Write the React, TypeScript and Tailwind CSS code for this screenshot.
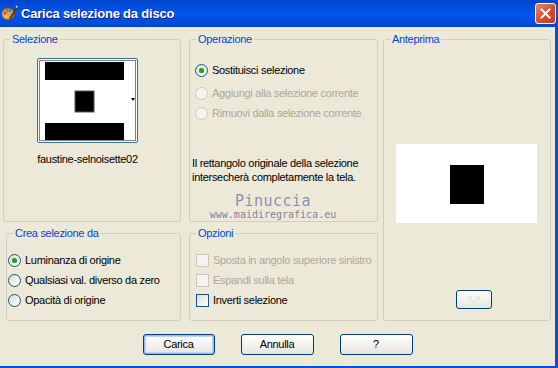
import React from "react";

const font = { fontFamily: '"Liberation Sans", Arial, sans-serif' };

function Radio({ checked, disabled }: { checked?: boolean; disabled?: boolean }) {
  return (
    <span
      className={
        disabled
          ? "w-[13px] h-[13px] rounded-full border border-[#CAC8BB] bg-[#F4F3EE] flex items-center justify-center shrink-0"
          : "w-[13px] h-[13px] rounded-full border border-[#1C5180] bg-gradient-to-br from-[#DCDCD7] to-white flex items-center justify-center shrink-0"
      }
    >
      {checked && <span className="w-[5px] h-[5px] rounded-full bg-[#21A121] shadow-[0_0_1px_#5BD35B]" />}
    </span>
  );
}

function Check({ disabled }: { disabled?: boolean }) {
  return (
    <span
      className={
        disabled
          ? "w-[13px] h-[13px] border border-[#CAC8BB] bg-[#F4F3EE] shrink-0"
          : "w-[13px] h-[13px] border border-[#1C5180] bg-gradient-to-br from-[#DCDCD7] to-white shrink-0"
      }
    />
  );
}

function Row({ children, label, disabled }: { children: React.ReactNode; label: string; disabled?: boolean }) {
  return (
    <div className="flex items-center gap-[4px] h-[14px] whitespace-nowrap">
      {children}
      <span className={disabled ? "text-[#ACA899] leading-[14px]" : "text-black leading-[14px]"}>{label}</span>
    </div>
  );
}

function Legend({ children }: { children: React.ReactNode }) {
  return <legend className="ml-[6px] px-[2px] text-[#0046D5] leading-[13px]">{children}</legend>;
}

function Button({ label, primary }: { label: string; primary?: boolean }) {
  return (
    <div
      className={
        primary
          ? "w-[72px] h-[21px] rounded-[3px] border border-[#003C74] bg-gradient-to-b from-white to-[#E6E5DE] shadow-[inset_0_0_0_1px_#98B8F8,inset_0_0_0_2px_#BCD4F6] flex items-center justify-center text-black"
          : "w-[73px] h-[21px] rounded-[3px] border border-[#003C74] bg-gradient-to-b from-white to-[#E6E5DE] flex items-center justify-center text-black"
      }
    >
      {label}
    </div>
  );
}

export default function App() {
  return (
    <div className="w-[558px] h-[368px] overflow-hidden bg-[#ECE9D8] text-[11px] tracking-[-0.3px] flex flex-col relative" style={font}>
      {/* Title bar */}
      <div className="h-[27px] shrink-0 flex items-center justify-between bg-gradient-to-b from-[#0044CF] via-[#0058EE] to-[#0047D0] pr-[2px]">
        <div className="flex items-center">
          <svg width="17" height="17" viewBox="0 0 17 17" className="ml-[1px]">
            <ellipse cx="7" cy="9" rx="6.5" ry="6" fill="#D9A066" stroke="#7A4A1E" strokeWidth="1" />
            <circle cx="4" cy="8" r="1.3" fill="#E33" />
            <circle cx="6" cy="5.5" r="1.3" fill="#3A3" />
            <circle cx="9" cy="5.5" r="1.3" fill="#36F" />
            <circle cx="5" cy="11.5" r="1.3" fill="#FC0" />
            <path d="M9 14 L16 2" stroke="#5B3A1A" strokeWidth="2" />
            <path d="M15 1 L16.5 2.5" stroke="#ddd" strokeWidth="1.5" />
          </svg>
          <span className="ml-[3px] text-white font-bold text-[13px] leading-[16px] tracking-[-0.2px] [text-shadow:1px_1px_0_#0A1E8C]">
            Carica selezione da disco
          </span>
        </div>
        <div className="w-[21px] h-[21px] rounded-[3px] border border-white bg-gradient-to-br from-[#E8846A] via-[#D9502E] to-[#C23A1C] flex items-center justify-center">
          <svg width="11" height="11" viewBox="0 0 11 11">
            <path d="M1.5 1.5 L9.5 9.5 M9.5 1.5 L1.5 9.5" stroke="white" strokeWidth="2" strokeLinecap="square" />
          </svg>
        </div>
      </div>

      {/* Body */}
      <div className="flex-1 flex flex-col border-r-[3px] border-b-[2px] border-[#0A4FD9]">
        <div className="flex pt-[6px] pl-[3px] gap-[8px]">
          {/* Column 1 */}
          <div className="flex flex-col gap-[5px] w-[178px] shrink-0">
            <fieldset className="min-w-0 h-[189px] border border-[#D0D0BF] rounded-[3px]">
              <Legend>Selezione</Legend>
              <div className="ml-[33px] mt-[12px] w-[101px] flex flex-col items-center">
                <div className="w-[101px] h-[85px] border border-[#3C6E97] rounded-[2px] bg-white relative">
                  <svg width="99" height="83" viewBox="0 0 99 83" className="block">
                    <rect x="1.5" y="1.5" width="96" height="80" fill="none" stroke="black" strokeDasharray="1 1" />
                    <rect x="7" y="3" width="79" height="18" fill="black" />
                    <rect x="37" y="32" width="19" height="21" fill="black" stroke="#555" />
                    <rect x="7" y="64" width="79" height="17" fill="black" />
                    <path d="M93 39 L97 39 L95 42 Z" fill="black" />
                  </svg>
                </div>
                <div className="mt-[10px] leading-[13px] text-black whitespace-nowrap">faustine-selnoisette02</div>
              </div>
            </fieldset>
            <fieldset className="min-w-0 ml-[3px] w-[175px] h-[94px] border border-[#D0D0BF] rounded-[3px]">
              <Legend>Crea selezione da</Legend>
              <div className="flex flex-col gap-[6px] mt-[13px] pl-[1px]">
                <Row label="Luminanza di origine">
                  <Radio checked />
                </Row>
                <Row label="Qualsiasi val. diverso da zero">
                  <Radio />
                </Row>
                <Row label="Opacità di origine">
                  <Radio />
                </Row>
              </div>
            </fieldset>
          </div>

          {/* Column 2 */}
          <div className="flex flex-col gap-[5px] w-[189px] shrink-0">
            <fieldset className="min-w-0 h-[189px] border border-[#D0D0BF] rounded-[3px]">
              <Legend>Operazione</Legend>
              <div className="flex flex-col mt-[17px] pl-[5px]">
                <Row label="Sostituisci selezione">
                  <Radio checked />
                </Row>
                <div className="mt-[9px]">
                  <Row label="Aggiungi alla selezione corrente" disabled>
                    <Radio disabled />
                  </Row>
                </div>
                <div className="mt-[6px]">
                  <Row label="Rimuovi dalla selezione corrente" disabled>
                    <Radio disabled />
                  </Row>
                </div>
              </div>
              <div className="mt-[36px] pl-[2px] leading-[14px] text-black whitespace-nowrap">
                Il rettangolo originale della selezione
                <br />
                intersecherà completamente la tela.
              </div>
            </fieldset>
            <fieldset className="min-w-0 h-[94px] border border-[#D0D0BF] rounded-[3px]">
              <Legend>Opzioni</Legend>
              <div className="flex flex-col gap-[6px] mt-[13px] pl-[6px]">
                <Row label="Sposta in angolo superiore sinistro" disabled>
                  <Check disabled />
                </Row>
                <Row label="Espandi sulla tela" disabled>
                  <Check disabled />
                </Row>
                <Row label="Inverti selezione">
                  <Check />
                </Row>
              </div>
            </fieldset>
          </div>

          {/* Column 3 */}
          <fieldset className="min-w-0 shrink-0 ml-[-3px] w-[168px] h-[288px] border border-[#D0D0BF] rounded-[3px]">
            <Legend>Anteprima</Legend>
            <div className="ml-[12px] mt-[98px] w-[141px] h-[79px] bg-white flex items-center justify-center">
              <svg width="141" height="79" viewBox="0 0 141 79" className="block">
                <rect x="54" y="21" width="34" height="39" fill="black" />
              </svg>
            </div>
            <div className="ml-[72px] mt-[67px] w-[36px] h-[19px] rounded-[3px] border border-[#003C74] bg-gradient-to-b from-white to-[#E6E5DE] flex items-center justify-center">
              <svg width="12" height="8" viewBox="0 0 12 8">
                <rect x="0" y="0" width="4" height="4" fill="#E8E8E8" />
                <rect x="8" y="0" width="4" height="4" fill="#E8E8E8" />
                <rect x="4" y="4" width="4" height="4" fill="#E8E8E8" />
              </svg>
            </div>
          </fieldset>
        </div>

        {/* Buttons */}
        <div className="flex justify-center gap-[26px] mt-[13px]">
          <Button label="Carica" primary />
          <Button label="Annulla" />
          <Button label="?" />
        </div>
      </div>

      {/* Watermark overlay */}
      <div className="absolute left-[208px] top-[193px] w-[130px] flex flex-col items-center pointer-events-none" style={{ fontFamily: '"DejaVu Sans Mono", monospace' }}>
        <span className="text-[15px] leading-[17px] text-[#8C91B4] tracking-[0.5px]">Pinuccia</span>
        <span className="text-[10px] leading-[12px] text-[#80859F] -mt-[1px] tracking-[0px]">www.maidiregrafica.eu</span>
      </div>
    </div>
  );
}
